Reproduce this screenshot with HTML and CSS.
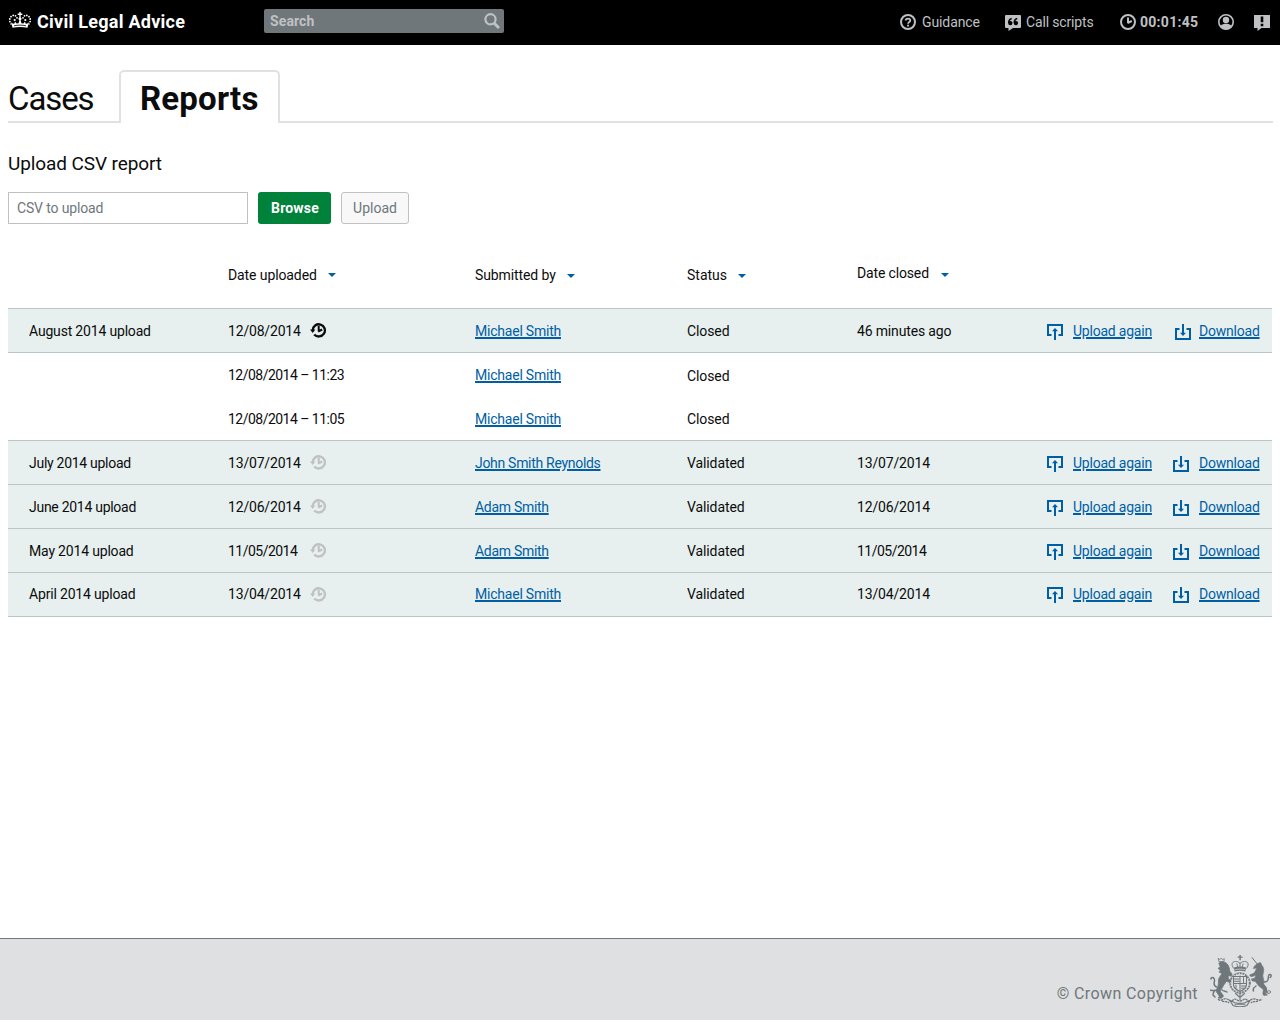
FILE: index.html
```
<!DOCTYPE html>
<html lang="en">
<head>
<meta charset="utf-8">
<title>Civil Legal Advice – Reports</title>
<link rel="stylesheet" href="styles.css">
</head>
<body>
<svg class="sprite" aria-hidden="true">
  <symbol id="i-history" viewBox="0 0 16 16">
    <path d="M2.700 8.400A6.100 6.100 0 1 1 4.200 12.400" fill="none" stroke="currentColor" stroke-width="2.300"/>
    <path d="M0 7.400h5.400L2.700 11z" fill="currentColor"/>
    <path d="M8.700 3.800v5.600M8.200 9.500l4-2" fill="none" stroke="currentColor" stroke-width="2"/>
  </symbol>
  <symbol id="i-upload" viewBox="0 0 16 16">
    <path d="M4.500 11H1V1h14v10h-3.500M8 16V6" fill="none" stroke="currentColor" stroke-width="2"/>
    <path d="M8 4l3 3.200H5z" fill="currentColor"/>
  </symbol>
  <symbol id="i-download" viewBox="0 0 16 16">
    <path d="M4.500 5H1v10h14V5h-3.500M8 0v10" fill="none" stroke="currentColor" stroke-width="2"/>
    <path d="M8 12L5 8.800h6z" fill="currentColor"/>
  </symbol>
</svg>

<header class="top">
  <a class="brand">
    <svg class="crown" viewBox="0 0 24 18" fill="#fff">
      <path d="M4.500 16.800L3.200 11.200l1.800 1.600 1.600-.4.300-2 1.700 2.200 2-.4.600-2.200h1.600l.6 2.200 2 .4 1.700-2.200.300 2 1.600.4 1.800-1.600-1.300 5.600c-4.500-1-10.500-1-15 0z"/>
      <path d="M6 14.800c4-.9 8-.9 12 0" stroke="#000" stroke-width=".8" fill="none"/>
      <path d="M11.300 1h1.400v1.500h1.600v1.400h-1.600v2.700l1 1.200-1.700 3-1.700-3 1-1.200V3.900H9.700V2.500h1.600z"/>
      <g>
        <circle cx="1.800" cy="8" r=".9"/><circle cx="1.900" cy="10.600" r=".9"/><circle cx="3" cy="5.700" r=".9"/><circle cx="5.200" cy="4.400" r=".9"/><circle cx="7.500" cy="4.800" r=".9"/><circle cx="9" cy="6.800" r=".9"/><circle cx="3" cy="13" r=".8"/>
        <circle cx="22.200" cy="8" r=".9"/><circle cx="22.100" cy="10.600" r=".9"/><circle cx="21" cy="5.700" r=".9"/><circle cx="18.800" cy="4.400" r=".9"/><circle cx="16.500" cy="4.800" r=".9"/><circle cx="15" cy="6.800" r=".9"/><circle cx="21" cy="13" r=".8"/>
        <circle cx="6.700" cy="9" r="1.100"/><circle cx="17.300" cy="9" r="1.100"/>
      </g>
    </svg>
    <span>Civil Legal Advice</span>
  </a>
  <div class="search">
    <span>Search</span>
    <svg width="16" height="16" viewBox="0 0 16 16" fill="none" stroke="#bfc1c3"><circle cx="6.500" cy="6.300" r="5.100" stroke-width="2.200"/><path d="M10 10l5 5" stroke-width="3"/></svg>
  </div>
  <nav class="tools">
    <a class="tool guidance">
      <svg width="16" height="16" viewBox="0 0 16 16" fill="none" stroke="currentColor"><circle cx="8" cy="8" r="7" stroke-width="2"/><path d="M5.700 6.600C5.700 3.900 10.300 3.900 10.300 6.500 10.300 8 8.100 8 8.100 9.700" stroke-width="1.800"/><path d="M7.100 10.700h2v1.800h-2z" fill="currentColor" stroke="none"/></svg>
      <span>Guidance</span>
    </a>
    <a class="tool scripts">
      <svg width="16" height="16" viewBox="0 0 16 16"><path d="M1 0h14a1 1 0 0 1 1 1v11a1 1 0 0 1-1 1H8l-4.500 3v-3H1a1 1 0 0 1-1-1V1a1 1 0 0 1 1-1z" fill="currentColor"/><g fill="none" stroke="#000"><path d="M6.700 3.500C4.500 4 3.700 5.500 3.800 8M12.200 3.500C10 4 9.200 5.500 9.300 8" stroke-width="1.500"/></g><circle cx="5.300" cy="8.100" r="2.200"/><circle cx="10.900" cy="8.100" r="2.200"/></svg>
      <span>Call scripts</span>
    </a>
    <a class="tool timer">
      <svg width="16" height="16" viewBox="0 0 16 16" fill="none" stroke="currentColor" stroke-width="2"><circle cx="8" cy="8" r="7"/><path d="M8 3.500V9M7.500 9l4.300-2"/></svg>
      <span>00:01:45</span>
    </a>
    <a class="tool user">
      <svg width="16" height="16" viewBox="0 0 16 16" fill="currentColor"><circle cx="8" cy="8" r="7.200" fill="none" stroke="currentColor" stroke-width="1.600"/><circle cx="8" cy="6" r="3.200"/><path d="M2.500 12C4 10 6 9.700 8 9.700s4 .3 5.500 2.300C12 14.500 10 15.500 8 15.500S4 14.500 2.500 12z"/></svg>
    </a>
    <a class="tool alert">
      <svg width="16" height="16" viewBox="0 0 16 16"><path d="M0 0h16v13H7.500l-4 3v-3H0z" fill="currentColor"/><path d="M6.700 1.500h2.600v5.700H6.700zM6.700 8.800h2.600v2.500H6.700z"/></svg>
    </a>
  </nav>
</header>

<main>
  <nav class="tabs">
    <a class="tab">Cases</a>
    <a class="tab current">Reports</a>
    <i class="rule"></i>
  </nav>

  <section>
    <h2>Upload CSV report</h2>
    <div class="form">
      <span class="field">CSV to upload</span>
      <button class="btn primary">Browse</button>
      <button class="btn secondary">Upload</button>
    </div>
  </section>

  <div class="table">
    <div class="row head">
      <span></span>
      <span class="sort up">Date uploaded</span>
      <span class="sort">Submitted by</span>
      <span class="sort status">Status</span>
      <span class="sort raised">Date closed</span>
    </div>
    <div class="row main">
      <span class="name wide">August 2014 upload</span>
      <span class="date"><b>12/08/2014</b><svg class="open"><use href="#i-history"/></svg></span>
      <span><a class="link">Michael Smith</a></span>
      <span class="state">Closed</span>
      <span class="closed">46 minutes ago</span>
      <span class="action"><svg><use href="#i-upload"/></svg><a class="link">Upload again</a></span>
      <span class="action down nudge"><svg><use href="#i-download"/></svg><a class="link">Download</a></span>
    </div>
    <div class="row sub first">
      <span></span><span class="stamp">12/08/2014 – 11:23</span>
      <span><a class="link">Michael Smith</a></span>
      <span class="state lower">Closed</span>
    </div>
    <div class="row sub">
      <span></span><span class="stamp">12/08/2014 – 11:05</span>
      <span><a class="link">Michael Smith</a></span>
      <span class="state">Closed</span>
    </div>
    <div class="row main">
      <span class="name">July 2014 upload</span>
      <span class="date"><b>13/07/2014</b><svg><use href="#i-history"/></svg></span>
      <span><a class="link long">John Smith Reynolds</a></span>
      <span class="state">Validated</span>
      <span class="closed date">13/07/2014</span>
      <span class="action"><svg><use href="#i-upload"/></svg><a class="link">Upload again</a></span>
      <span class="action down"><svg><use href="#i-download"/></svg><a class="link">Download</a></span>
    </div>
    <div class="row main">
      <span class="name">June 2014 upload</span>
      <span class="date"><b>12/06/2014</b><svg><use href="#i-history"/></svg></span>
      <span><a class="link long">Adam Smith</a></span>
      <span class="state">Validated</span>
      <span class="closed">12/06/2014</span>
      <span class="action"><svg><use href="#i-upload"/></svg><a class="link">Upload again</a></span>
      <span class="action down"><svg><use href="#i-download"/></svg><a class="link">Download</a></span>
    </div>
    <div class="row main">
      <span class="name wide">May 2014 upload</span>
      <span class="date tight"><b>11/05/2014</b><svg><use href="#i-history"/></svg></span>
      <span><a class="link long">Adam Smith</a></span>
      <span class="state">Validated</span>
      <span class="tight">11/05/2014</span>
      <span class="action"><svg><use href="#i-upload"/></svg><a class="link">Upload again</a></span>
      <span class="action down"><svg><use href="#i-download"/></svg><a class="link">Download</a></span>
    </div>
    <div class="row main last">
      <span class="name wide">April 2014 upload</span>
      <span class="date"><b>13/04/2014</b><svg><use href="#i-history"/></svg></span>
      <span><a class="link">Michael Smith</a></span>
      <span class="state">Validated</span>
      <span class="closed">13/04/2014</span>
      <span class="action"><svg><use href="#i-upload"/></svg><a class="link">Upload again</a></span>
      <span class="action down"><svg><use href="#i-download"/></svg><a class="link">Download</a></span>
    </div>
  </div>
</main>

<footer>
  <span>© Crown Copyright</span>
  <svg class="arms" viewBox="0 0 62 52" fill="#6f777b" stroke-linecap="round">
    <!-- crown -->
    <path d="M29.400 0h1.400v1.500h1.700v1.300h-1.700v2.400h-1.400V2.800h-1.700V1.500h1.700z"/>
    <path d="M24 13.500c-3-3-2.500-7 1.500-7 2 0 3.500.8 4.600 2 1.100-1.200 2.600-2 4.600-2 4 0 4.500 4 1.500 7M30 8v5M27 9l1 4M33 9l-1 4" fill="none" stroke="#6f777b" stroke-width="1" stroke-dasharray="1.200 .8"/>
    <path d="M24 12.500c4-1.200 8-1.200 12 0l-.6 4c-3.600-1-7.200-1-10.800 0z"/>
    <path d="M25.500 14.600c3-.7 6-.7 9 0" stroke="#dee0e2" stroke-width=".7" fill="none"/>
    <!-- shield and garter -->
    <circle cx="30" cy="28" r="9.600" fill="none" stroke="#6f777b" stroke-width="1.600" stroke-dasharray="1.600 1.200" stroke-linecap="butt"/>
    <circle cx="30" cy="28" r="10.400" fill="none" stroke="#6f777b" stroke-width=".6"/>
    <path d="M23.500 21.500h13v8c0 3.500-3 5.500-6.500 7-3.500-1.500-6.500-3.500-6.500-7z" fill="none" stroke="#6f777b" stroke-width="1.100"/>
    <path d="M30 21v15M23.500 28.500h13M24.500 24h4.500M24.500 26.300h4.500M31.500 31h4M31.500 33.200h3M33.500 22.500v5M26 30v4" fill="none" stroke="#6f777b" stroke-width="1"/>
    <!-- lion -->
    <path d="M8.500 3.500l1.300 1.200L11.300 3l1.300 1.700 1.700-1-.4 3H9.300z" fill="none" stroke="#6f777b" stroke-width=".8"/>
    <path d="M9 8c2-2 6-1.500 8 .8 1.800 1.800 2.600 4.700 2.600 7.200l2.400 3-.7 2.200-3.300-.7.500 3.500 2.500 1.500-1 2-3.800-1.200c-1 2.500-3.200 4-3.700 6.200l-2.500 3.500 3.500 5-2 2.300-3.300-.3 1.200-1.700-3-4.500c0-3 1.600-4.600 2-7.800.2-2.300-.4-4.200.8-6.200l2.800-4.300-3-1.500 1.500-2-2.500-1.500 2-1.500z" stroke="#6f777b" stroke-width=".8"/>
    <path d="M9.500 34.500c-4 1.500-7 1-9 .7M7 35c-2-.5-4 2-4 5l2 2M6.500 32C1.500 30 6 26 4 23.500c-1.300-1.700-3.500-.7-3 .5M12 35c2 1.500 3.500 1 5 2" fill="none" stroke="#6f777b" stroke-width="1.500"/>
    <!-- unicorn -->
    <path d="M42 2.500l6 7.500" stroke="#6f777b" stroke-width="1"/>
    <path d="M44.500 11l3-2.500 3-1 1.500 3c1.500 1.600 2 3.800 1.600 6l-.8 4c.3 3.500 1.700 4.500.9 8.500l3 4-1.200 5.500 2 1.500-3.700.5-1-1.500.5-4.500-4.500-3.500-3.500-4.500-3-.5-1-2 3.200-.7 1.700-3-5.200 1.500-1.500-1.800 4.800-2 2.500-5-3.200.5z" stroke="#6f777b" stroke-width=".6"/>
    <path d="M54 27c7 0 2.500-6.500 5.500-7.500 2-.5 2 2 .7 3M46 31c-3 2-3 4-2.500 5M53 30c2 3 4 3 4 8" fill="none" stroke="#6f777b" stroke-width="1.500"/>
    <circle cx="59" cy="37" r="1.500" fill="none" stroke="#6f777b" stroke-width=".8"/>
    <!-- motto scroll -->
    <path d="M8 44c3 3.500 5-1.500 9 0s3.500 4 6 1c3-2.500 4 1 7 1s4-3.500 7-1c2.500 3 2-.5 6-1s6 3 9 0M12 46c3 1.500 5-.5 7 2M48 46c-3 1.500-5-.5-7 2" fill="none" stroke="#6f777b" stroke-width="1.300" stroke-linecap="butt" stroke-dasharray="2.400 .6"/>
    <path d="M20 45.500l3 5c5 2 9 2 14 0l3-5-5 2.200c-4 1-6 1-10 0z" fill="none" stroke="#6f777b" stroke-width="1.100"/>
    <path d="M25 49.200h10M25.500 38.500l4.500 4 4.500-4M30 38v7" fill="none" stroke="#6f777b" stroke-width="1.100"/>
  </svg>
</footer>
</body>
</html>
```
FILE: styles.css
```
* { box-sizing: border-box; }

body {
  margin: 0;
  min-height: 1020px;
  display: flex;
  flex-direction: column;
  font: 14px/20px Roboto, "Liberation Sans", sans-serif;
  color: #0b0c0c;
  background: #fff;
}

svg { flex: none; }
.sprite { position: absolute; width: 0; height: 0; }

/* Header */
.top {
  height: 45px;
  padding: 0 10px 0 8px;
  display: flex;
  align-items: flex-start;
  background: #000;
  color: #bfc1c3;
}
.brand {
  width: 256px;
  padding-top: 10px;
  display: flex;
  gap: 5px;
  color: #fff;
  font-size: 18px;
  font-weight: 700;
  line-height: 24px;
  letter-spacing: .26px;
}
.crown { width: 24px; height: 18px; margin-top: 1px; }
.search {
  width: 240px;
  height: 24px;
  margin-top: 9px;
  padding: 0 4px 0 6px;
  display: flex;
  align-items: center;
  justify-content: space-between;
  border-radius: 2px;
  background: #6f777b;
  color: #bfc1c3;
  font-weight: 700;
  letter-spacing: .1px;
}
.tools {
  margin: 12px 0 0 auto;
  display: flex;
}
.tool { display: flex; align-items: center; }
.guidance { gap: 6px; width: 105px; letter-spacing: -.1px; }
.scripts { gap: 5px; width: 115px; letter-spacing: -.15px; }
.timer { gap: 4px; width: 98px; font-weight: 700; letter-spacing: .28px; }
.user { width: 36px; }
.scripts svg { margin-top: 2px; }
.alert svg { margin-top: 1px; }

/* Tabs */
main { flex: 1; padding: 25px 8px 0; }
.tabs { display: flex; height: 53px; margin-right: -1px; }
.tab {
  width: 111px;
  height: 53px;
  border-bottom: 2px solid #dee3e2;
  font-size: 33px;
  line-height: 57px;
  letter-spacing: -1.1px;
}
.tab.current {
  width: 161px;
  padding-left: 19px;
  border: 2px solid #dee3e2;
  border-bottom: 0;
  border-radius: 5px 5px 0 0;
  font-weight: 700;
  line-height: 53px;
  letter-spacing: .2px;
}
.rule { flex: 1; border-bottom: 2px solid #dee3e2; }

/* Upload form */
h2 {
  margin: 28px 0 16px;
  font-size: 19px;
  font-weight: 400;
  line-height: 25px;
  letter-spacing: -.1px;
}
.form { display: flex; height: 32px; }
.field {
  width: 240px;
  margin-right: 10px;
  padding-left: 8px;
  border: 1px solid #bfc1c3;
  color: #6f777b;
  line-height: 30px;
  letter-spacing: -.15px;
}
.btn {
  height: 32px;
  padding: 0;
  border-radius: 3px;
  font: inherit;
}
.primary {
  width: 73px;
  margin-right: 10px;
  border: 0;
  padding-left: 1px;
  background: #00823b;
  color: #fff;
  font-weight: 700;
  letter-spacing: .2px;
}
.secondary {
  width: 68px;
  border: 1px solid #bfc1c3;
  background: #f8f8f8;
  color: #6f777b;
}

/* Reports table */
.table { margin-top: 28px; border-bottom: 1px solid #bac7c6; }
.row {
  height: 44px;
  padding: 13px 0 0 21px;
  display: grid;
  grid-template-columns: 199px 247px 212px 170px 190px 126px 1fr;
  align-items: start;
  white-space: nowrap;
}
.head { height: 56px; }
.main {
  padding-top: 12px;
  border-top: 1px solid #bac7c6;
  background: #e7f0ef;
}
.first { padding-top: 12px; border-top: 1px solid #bac7c6; }
.last { padding-top: 11px; }
.sort { display: flex; align-items: center; gap: 11px; letter-spacing: -.1px; }
.status { letter-spacing: 0; }
.sort::after {
  content: "";
  margin-top: 2px;
  border: 4px solid transparent;
  border-top-color: #005ea5;
  border-bottom: 0;
}
.up::after { margin-top: 0; }
.raised { margin-top: -2px; gap: 12px; letter-spacing: -.15px; }
.raised::after { margin-top: 3px; }
.lower { padding-top: 1px; }

.name { letter-spacing: -.28px; }
.wide { letter-spacing: -.18px; }
.date { display: flex; letter-spacing: -.18px; }
.date b { width: 82px; font-weight: 400; }
.date svg { width: 16px; height: 16px; margin-top: 1px; color: #bfc1c3; }
.date .open { color: #0b0c0c; }
.last .date svg { margin-top: 2px; }
.stamp { letter-spacing: -.52px; }
.state { letter-spacing: -.1px; }
.closed { letter-spacing: -.16px; }
.tight { letter-spacing: -.52px; }
.link {
  color: #005ea5;
  letter-spacing: -.22px;
  text-decoration: underline 2px;
  text-underline-offset: 1px;
}
.long { letter-spacing: -.3px; }
.action { display: flex; gap: 10px; }
.action svg { width: 16px; height: 16px; margin-top: 3px; color: #005ea5; }
.nudge { padding-left: 2px; }
.nudge svg { margin-right: -2px; }

/* Footer */
footer {
  height: 82px;
  padding: 16px 8px 0;
  display: flex;
  justify-content: flex-end;
  gap: 12px;
  border-top: 1px solid #6f777b;
  background: #dee0e2;
  color: #6f777b;
  font-size: 16px;
  letter-spacing: .4px;
}
footer span { margin-top: 29px; }
.arms { width: 62px; height: 52px; }
```
